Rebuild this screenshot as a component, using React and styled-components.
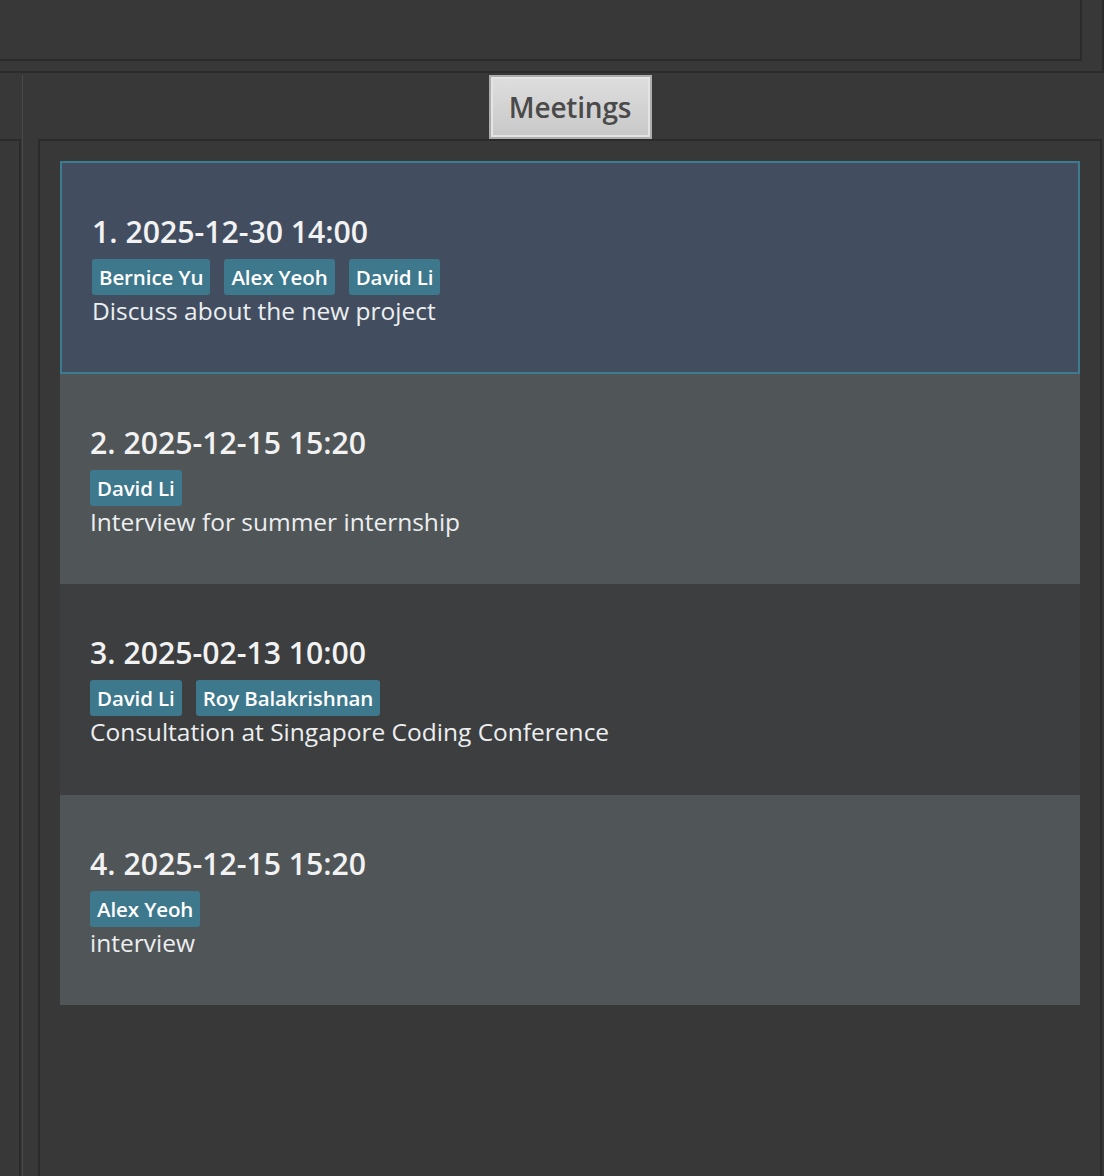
import React from "react";
import styled, { createGlobalStyle } from "styled-components";

const Global = createGlobalStyle`
  html, body {
    margin: 0;
    padding: 0;
    background: #383838;
    font-family: "Open Sans", "Noto Sans", sans-serif;
  }
  * { box-sizing: border-box; }
`;

const Page = styled.div`
  width: 1104px;
  min-height: 1176px;
  display: flex;
  flex-direction: column;
  background: #383838;
  overflow: hidden;
`;

const TopArea = styled.div`
  height: 73px;
  flex: none;
  border-bottom: 2px solid #2b2b2b;
  border-right: 2px solid #2b2b2b;
`;

const TopInner = styled.div`
  width: 1082px;
  height: 61px;
  border-bottom: 2px solid #2b2b2b;
  border-right: 2px solid #2b2b2b;
`;

const Main = styled.div`
  flex: 1;
  display: flex;
`;

const LeftPane = styled.div`
  width: 21px;
  flex: none;
  display: flex;
  flex-direction: column;
`;

const PaneHeader = styled.div`
  height: 66px;
  flex: none;
  display: flex;
  justify-content: center;
  align-items: flex-end;
`;

const LeftFrame = styled.div`
  flex: 1;
  border-top: 2px solid #2b2b2b;
  border-right: 2px solid #2b2b2b;
`;

const Divider = styled.div`
  width: 4px;
  flex: none;
  padding-top: 2px;
  display: flex;
  justify-content: center;
  &::before {
    content: "";
    display: block;
    width: 1px;
    margin-left: -1px;
    background: #4a4a4a;
  }
`;

const RightPane = styled.div`
  flex: 1;
  display: flex;
  flex-direction: column;
  padding-left: 13px;
  padding-right: 2px;
`;

const TabButton = styled.div`
  width: 163px;
  height: 64px;
  display: flex;
  align-items: center;
  justify-content: center;
  border: 2px solid #adadad;
  box-shadow: inset 0 0 0 2px #e4e4e4;
  background: linear-gradient(#dedede, #c8c8c8);
  color: #4a4a4a;
  font-size: 28px;
  font-weight: 600;
  letter-spacing: -0.2px;
`;

const Frame = styled.div`
  flex: 1;
  border: 2px solid #2b2b2b;
  border-bottom: none;
  padding: 20px 20px 0 20px;
`;

const List = styled.div`
  display: flex;
  flex-direction: column;
`;

const Card = styled.div`
  display: flex;
  flex-direction: column;
  padding: ${(p) => (p.$selected ? "51px 28px 45.5px 30px" : "51px 30px 47.5px 30px")};
  background: ${(p) => p.$bg};
  border: ${(p) => (p.$selected ? "2px solid #3d7b90" : "none")};
`;

const Title = styled.div`
  color: #f2f2f2;
  font-size: 30.2px;
  line-height: 35px;
  font-weight: 600;
`;

const Tags = styled.div`
  display: flex;
  gap: 14px;
  margin-top: 10px;
`;

const Tag = styled.span`
  height: 36px;
  display: flex;
  align-items: center;
  padding: 0 7px;
  border-radius: 3px;
  background: #3d788c;
  color: #ffffff;
  font-size: 20.5px;
  font-weight: 600;
  letter-spacing: -0.1px;
`;

const Description = styled.div`
  margin-top: 1px;
  color: #eceef0;
  font-size: 24.5px;
  line-height: 30px;
`;

const meetings = [
  {
    date: "2025-12-30 14:00",
    people: ["Bernice Yu", "Alex Yeoh", "David Li"],
    desc: "Discuss about the new project",
    bg: "#424e60",
    selected: true,
  },
  {
    date: "2025-12-15 15:20",
    people: ["David Li"],
    desc: "Interview for summer internship",
    bg: "#505557",
  },
  {
    date: "2025-02-13 10:00",
    people: ["David Li", "Roy Balakrishnan"],
    desc: "Consultation at Singapore Coding Conference",
    bg: "#3c3e3f",
  },
  {
    date: "2025-12-15 15:20",
    people: ["Alex Yeoh"],
    desc: "interview",
    bg: "#505557",
  },
];

export default function App() {
  return (
    <>
      <Global />
      <Page>
        <TopArea>
          <TopInner />
        </TopArea>
        <Main>
          <LeftPane>
            <PaneHeader />
            <LeftFrame />
          </LeftPane>
          <Divider />
          <RightPane>
            <PaneHeader>
              <TabButton>Meetings</TabButton>
            </PaneHeader>
            <Frame>
              <List>
                {meetings.map((m, i) => (
                  <Card key={i} $bg={m.bg} $selected={m.selected}>
                    <Title>
                      {i + 1}. {m.date}
                    </Title>
                    <Tags>
                      {m.people.map((p) => (
                        <Tag key={p}>{p}</Tag>
                      ))}
                    </Tags>
                    <Description>{m.desc}</Description>
                  </Card>
                ))}
              </List>
            </Frame>
          </RightPane>
        </Main>
      </Page>
    </>
  );
}
